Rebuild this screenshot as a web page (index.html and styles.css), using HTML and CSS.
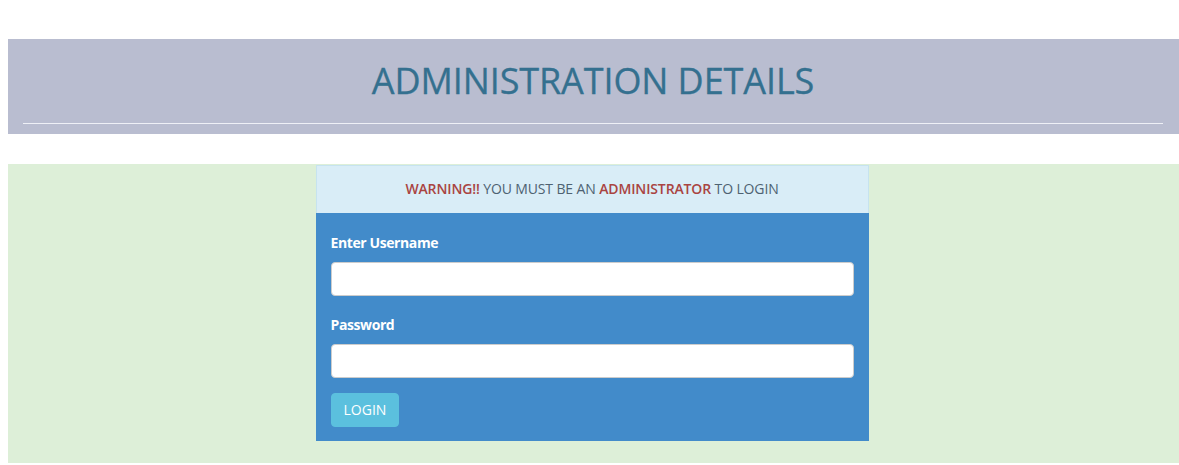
FILE: index.html
```html
<!DOCTYPE html>
<html>
<head>
<meta charset="utf-8">
<link rel="stylesheet" href="styles.css">
</head>
<body>
<div class="page">
  <header class="banner">
    <h1 class="banner-title">ADMINISTRATION DETAILS</h1>
    <hr class="banner-rule">
  </header>
  <section class="login-area">
    <div class="panel">
      <div class="panel-heading"><span class="warn">WARNING!!</span> YOU MUST BE AN <span class="warn">ADMINISTRATOR</span> TO LOGIN</div>
      <form class="panel-body">
        <label class="field-label">Enter Username</label>
        <input class="field-input" type="text">
        <label class="field-label second">Password</label>
        <input class="field-input" type="password">
        <button class="btn-login" type="button">LOGIN</button>
      </form>
    </div>
  </section>
</div>
</body>
</html>
```
FILE: styles.css
```css
html, body {
  margin: 0;
  padding: 0;
  background: #ffffff;
  font-family: "Open Sans", "Liberation Sans", sans-serif;
  overflow: hidden;
}
.page {
  padding: 39px 0 0 8px;
}
.banner {
  background: #b9bdd0;
  height: 95px;
  padding: 0 16px 0 15px;
  box-sizing: border-box;
  display: flex;
  flex-direction: column;
}
.banner-title {
  margin: 0;
  padding-top: 19px;
  height: 84px;
  box-sizing: border-box;
  text-align: center;
  font-weight: 400;
  font-size: 36px;
  line-height: 46px;
  color: #34708f;
  letter-spacing: -0.1px;
  -webkit-text-stroke: 0.3px #34708f;
}
.banner-rule {
  margin: 0;
  border: 0;
  height: 1px;
  background: #eef0f6;
}
.login-area {
  margin-top: 30px;
  background: #ddefd8;
  height: 299px;
  padding-top: 1px;
  box-sizing: border-box;
  display: flex;
  justify-content: center;
}
.panel {
  width: 553px;
  height: 276px;
  margin-left: -3px;
  background: #428bca;
  display: flex;
  flex-direction: column;
}
.panel-heading {
  background: #d9edf7;
  border: 1px solid #c6e3ef;
  border-bottom: 0;
  height: 48px;
  box-sizing: border-box;
  text-align: center;
  font-size: 14px;
  line-height: 46px;
  letter-spacing: -0.13px;
  color: #4e6272;
}
.warn {
  color: #a94442;
  font-weight: 600;
}
.panel-body {
  margin: 0;
  padding: 20px 15px 14px 15px;
  display: flex;
  flex-direction: column;
  align-items: flex-start;
}
.field-label {
  display: block;
  color: #ffffff;
  font-weight: 700;
  font-size: 14px;
  line-height: 20px;
  letter-spacing: -0.4px;
  margin-bottom: 9px;
}
.field-label.second {
  margin-top: 19px;
}
.field-input {
  width: 523px;
  height: 34px;
  box-sizing: border-box;
  border: 1px solid #cccccc;
  border-radius: 4px;
  background: #ffffff;
  padding: 6px 12px;
  margin: 0;
  font-family: inherit;
  font-size: 14px;
}
.btn-login {
  margin-top: 15px;
  height: 34px;
  padding: 0 12px;
  background: #5bc0de;
  border: 1px solid #5bc0de;
  border-radius: 4px;
  color: #ffffff;
  font-family: inherit;
  font-size: 14px;
  line-height: 32px;
}
```
